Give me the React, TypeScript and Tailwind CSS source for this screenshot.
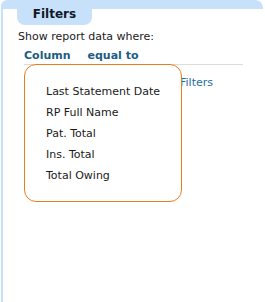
import React from "react";

const fields = ["Last Statement Date", "RP Full Name", "Pat. Total", "Ins. Total", "Total Owing"];

export default function App() {
  return (
    <div className="relative w-[265px] h-[302px] bg-white pl-[1px] pr-[2px] font-['DejaVu_Sans',sans-serif] text-[11px] text-[#1a1a1a]">
      <div className="h-full border-l-2 border-t-[9px] border-[#c7e1fb] rounded-tl-[6px] rounded-tr-[8px]">
        {/* tab */}
        <div className="-mt-[9px] ml-[14px] w-[75px] h-[25px] bg-[#c7e1fb] rounded-b-[8px] flex justify-center pt-[8px]">
          <span className="font-bold text-[12px] leading-none text-[#111827]">Filters</span>
        </div>

        <div className="pl-[15px] pr-[20px]">
          <p className="mt-[5px] leading-[14px]">Show report data where:</p>

          <div className="mt-[5px] ml-[6px]">
            <div className="flex gap-[17px] h-[16px] items-center font-bold text-[#1d5d86] border-b border-[#dcdcdc]">
              <span>Column</span>
              <span>equal to</span>
            </div>
            <div className="flex justify-end pr-[30px] pt-[10px] text-[#1e6fa3]">
              <span>No Filters</span>
            </div>
          </div>
        </div>
      </div>

      {/* column dropdown */}
      <div className="absolute left-[24px] top-[64px] w-[158px] h-[138px] bg-white border-[1.5px] border-[#ec7c1c] rounded-[12px] pl-[21px] pt-[20px]">
        {fields.map((f) => (
          <div key={f} className="h-[21px] leading-[14px]">
            {f}
          </div>
        ))}
      </div>
    </div>
  );
}
